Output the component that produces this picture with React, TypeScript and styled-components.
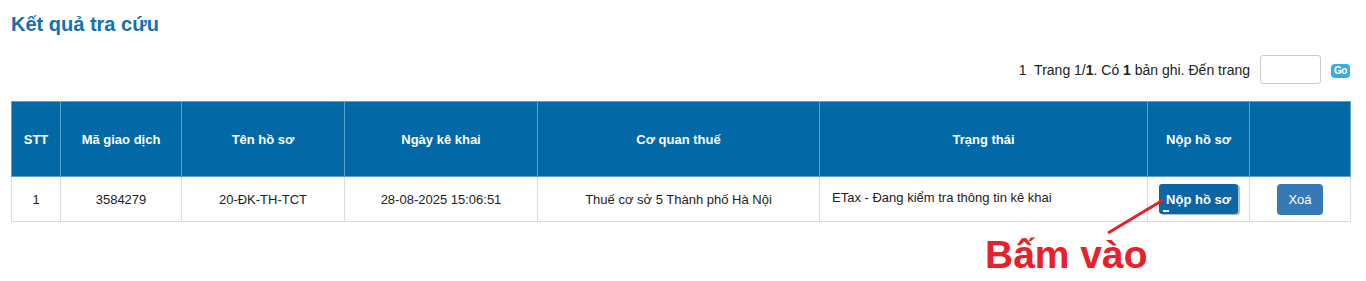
import React from "react";
import styled, { createGlobalStyle } from "styled-components";

const GlobalStyle = createGlobalStyle`
  html, body {
    margin: 0;
    padding: 0;
    background: #fff;
    font-family: "Liberation Sans", Arial, sans-serif;
  }
`;

const Page = styled.div`
  position: relative;
  width: 1366px;
  height: 281px;
  padding: 12px 16px 0 11px;
  box-sizing: border-box;
`;

const Title = styled.h2`
  margin: 0;
  font-size: 20px;
  line-height: 24px;
  font-weight: bold;
  color: #1471ad;
`;

const Pager = styled.div`
  display: flex;
  justify-content: flex-end;
  align-items: center;
  gap: 10px;
  margin-top: 19px;
  height: 29px;
  font-size: 14px;
  color: #222;
`;

const PageInput = styled.input`
  width: 61px;
  height: 29px;
  box-sizing: border-box;
  border: 1px solid #ccc;
  border-radius: 3px;
`;

const GoButton = styled.span`
  display: inline-flex;
  align-items: center;
  justify-content: center;
  width: 19px;
  height: 14px;
  border-radius: 4px;
  background: #39ade0;
  color: #fff;
  font-size: 10px;
  font-weight: bold;
  letter-spacing: -0.5px;
  margin-top: 2px;
`;

const Table = styled.table`
  margin-top: 17px;
  width: 1339px;
  border-collapse: collapse;
  font-size: 13px;
  table-layout: fixed;
`;

const Th = styled.th`
  box-sizing: border-box;
  height: 75px;
  background: #0369a6;
  color: #fff;
  font-weight: bold;
  text-align: center;
  border: 1px solid #5f9fcf;
  padding: 0;
`;

const Td = styled.td<{ $left?: boolean }>`
  box-sizing: border-box;
  height: 45px;
  border: 1px solid #ddd;
  color: #222;
  vertical-align: middle;
  text-align: ${(p) => (p.$left ? "left" : "center")};
  padding: ${(p) => (p.$left ? "0 12px 4px" : "0 4px")};
`;

const SubmitButton = styled.button`
  position: relative;
  display: inline-flex;
  align-items: center;
  vertical-align: middle;
  font-family: inherit;
  font-size: 13px;
  font-weight: bold;
  color: #fff;
  background: #0d65a3;
  border: none;
  border-radius: 3px;
  height: 30px;
  padding: 0 7px 0 7px;
  box-shadow: 2px 1px 0 #9dbfdf;
  &::after {
    content: "";
    position: absolute;
    left: 4px;
    bottom: 2px;
    width: 6px;
    height: 2px;
    background: #fff;
  }
`;

const DeleteButton = styled.button`
  display: inline-flex;
  align-items: center;
  justify-content: center;
  vertical-align: middle;
  font-family: inherit;
  font-size: 13px;
  color: #fff;
  background: #337ab7;
  border: none;
  border-radius: 4px;
  height: 31px;
  width: 46px;
`;

const Annotation = styled.svg`
  position: absolute;
  left: 0;
  top: 0;
  pointer-events: none;
`;

const Callout = styled.div`
  position: absolute;
  left: 985px;
  top: 233px;
  font-size: 39px;
  font-weight: bold;
  line-height: 44px;
  color: #e8202a;
`;

const columns = [
  { label: "STT", w: 49 },
  { label: "Mã giao dịch", w: 121 },
  { label: "Tên hồ sơ", w: 163 },
  { label: "Ngày kê khai", w: 193 },
  { label: "Cơ quan thuế", w: 282 },
  { label: "Trạng thái", w: 328 },
  { label: "Nộp hồ sơ", w: 102 },
  { label: "", w: 101 },
];

export default function App() {
  return (
    <Page>
      <GlobalStyle />
      <Title>Kết quả tra cứu</Title>
      <Pager>
        <span>
          1&nbsp; Trang 1/<b>1</b>. Có <b>1</b> bản ghi. Đến trang
        </span>
        <PageInput />
        <GoButton>Go</GoButton>
      </Pager>
      <Table>
        <colgroup>
          {columns.map((c, i) => (
            <col key={i} style={{ width: c.w }} />
          ))}
        </colgroup>
        <thead>
          <tr>
            {columns.map((c, i) => (
              <Th key={i}>{c.label}</Th>
            ))}
          </tr>
        </thead>
        <tbody>
          <tr>
            <Td>1</Td>
            <Td>3584279</Td>
            <Td>20-ĐK-TH-TCT</Td>
            <Td>28-08-2025 15:06:51</Td>
            <Td>Thuế cơ sở 5 Thành phố Hà Nội</Td>
            <Td $left>ETax - Đang kiểm tra thông tin kê khai</Td>
            <Td>
              <SubmitButton>Nộp hồ sơ</SubmitButton>
            </Td>
            <Td>
              <DeleteButton>Xoá</DeleteButton>
            </Td>
          </tr>
        </tbody>
      </Table>
      <Annotation width="1366" height="281">
        <line x1="1163" y1="200" x2="1108" y2="233" stroke="#e8202a" strokeWidth="3" />
      </Annotation>
      <Callout>Bấm vào</Callout>
    </Page>
  );
}
